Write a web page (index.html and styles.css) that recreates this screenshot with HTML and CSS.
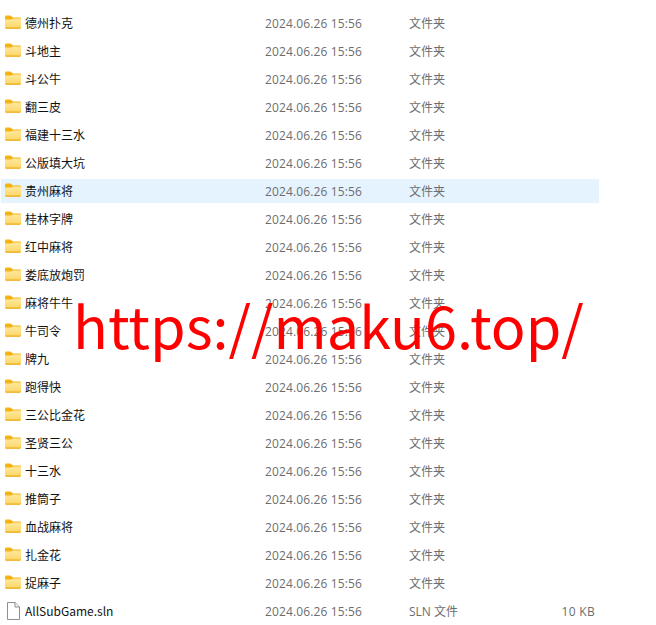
FILE: index.html
```html
<!DOCTYPE html>
<html lang="zh">
<head>
<meta charset="utf-8">
<title>AllSubGame</title>
<link rel="stylesheet" href="styles.css">
</head>
<body>
<svg class="defs" width="0" height="0" aria-hidden="true">
<defs>
<linearGradient id="fg" x1="0" y1="0" x2="0" y2="1"><stop offset="0" stop-color="#ffe9a0"/><stop offset="1" stop-color="#fdd565"/></linearGradient>
<symbol id="folder" viewBox="0 0 16 14">
<path d="M0 2.2C0 1.2.6.6 1.5.6h3.7c.6 0 .9.2 1.3.6L8 2.6h6.6c.8 0 1.4.6 1.4 1.4v2H0z" fill="#f5b312"/>
<path d="M0 4.4h6.4L8 3.4h6.6c.8 0 1.4.6 1.4 1.4v7.6c0 .7-.6 1.2-1.3 1.2H1.3C.6 13.6 0 13.1 0 12.4z" fill="url(#fg)"/>
<path d="M0 12.6h16c0 .7-.6 1.2-1.3 1.2H1.3C.6 13.8 0 13.3 0 12.6z" fill="#eeab12"/>
</symbol>
</defs>
</svg>
<main class="list">
<div class="row"><span class="name"><svg class="icon"><use href="#folder"/></svg>德州扑克</span><span class="date">2024.06.26 15:56</span><span class="type">文件夹</span><span class="size"></span></div>
<div class="row"><span class="name"><svg class="icon"><use href="#folder"/></svg>斗地主</span><span class="date">2024.06.26 15:56</span><span class="type">文件夹</span><span class="size"></span></div>
<div class="row"><span class="name"><svg class="icon"><use href="#folder"/></svg>斗公牛</span><span class="date">2024.06.26 15:56</span><span class="type">文件夹</span><span class="size"></span></div>
<div class="row"><span class="name"><svg class="icon"><use href="#folder"/></svg>翻三皮</span><span class="date">2024.06.26 15:56</span><span class="type">文件夹</span><span class="size"></span></div>
<div class="row"><span class="name"><svg class="icon"><use href="#folder"/></svg>福建十三水</span><span class="date">2024.06.26 15:56</span><span class="type">文件夹</span><span class="size"></span></div>
<div class="row"><span class="name"><svg class="icon"><use href="#folder"/></svg>公版填大坑</span><span class="date">2024.06.26 15:56</span><span class="type">文件夹</span><span class="size"></span></div>
<div class="row selected"><span class="name"><svg class="icon"><use href="#folder"/></svg>贵州麻将</span><span class="date">2024.06.26 15:56</span><span class="type">文件夹</span><span class="size"></span></div>
<div class="row"><span class="name"><svg class="icon"><use href="#folder"/></svg>桂林字牌</span><span class="date">2024.06.26 15:56</span><span class="type">文件夹</span><span class="size"></span></div>
<div class="row"><span class="name"><svg class="icon"><use href="#folder"/></svg>红中麻将</span><span class="date">2024.06.26 15:56</span><span class="type">文件夹</span><span class="size"></span></div>
<div class="row"><span class="name"><svg class="icon"><use href="#folder"/></svg>娄底放炮罚</span><span class="date">2024.06.26 15:56</span><span class="type">文件夹</span><span class="size"></span></div>
<div class="row"><span class="name"><svg class="icon"><use href="#folder"/></svg>麻将牛牛</span><span class="date">2024.06.26 15:56</span><span class="type">文件夹</span><span class="size"></span></div>
<div class="row"><span class="name"><svg class="icon"><use href="#folder"/></svg>牛司令</span><span class="date">2024.06.26 15:56</span><span class="type">文件夹</span><span class="size"></span></div>
<div class="row"><span class="name"><svg class="icon"><use href="#folder"/></svg>牌九</span><span class="date">2024.06.26 15:56</span><span class="type">文件夹</span><span class="size"></span></div>
<div class="row"><span class="name"><svg class="icon"><use href="#folder"/></svg>跑得快</span><span class="date">2024.06.26 15:56</span><span class="type">文件夹</span><span class="size"></span></div>
<div class="row"><span class="name"><svg class="icon"><use href="#folder"/></svg>三公比金花</span><span class="date">2024.06.26 15:56</span><span class="type">文件夹</span><span class="size"></span></div>
<div class="row"><span class="name"><svg class="icon"><use href="#folder"/></svg>圣贤三公</span><span class="date">2024.06.26 15:56</span><span class="type">文件夹</span><span class="size"></span></div>
<div class="row"><span class="name"><svg class="icon"><use href="#folder"/></svg>十三水</span><span class="date">2024.06.26 15:56</span><span class="type">文件夹</span><span class="size"></span></div>
<div class="row"><span class="name"><svg class="icon"><use href="#folder"/></svg>推筒子</span><span class="date">2024.06.26 15:56</span><span class="type">文件夹</span><span class="size"></span></div>
<div class="row"><span class="name"><svg class="icon"><use href="#folder"/></svg>血战麻将</span><span class="date">2024.06.26 15:56</span><span class="type">文件夹</span><span class="size"></span></div>
<div class="row"><span class="name"><svg class="icon"><use href="#folder"/></svg>扎金花</span><span class="date">2024.06.26 15:56</span><span class="type">文件夹</span><span class="size"></span></div>
<div class="row"><span class="name"><svg class="icon"><use href="#folder"/></svg>捉麻子</span><span class="date">2024.06.26 15:56</span><span class="type">文件夹</span><span class="size"></span></div>
<div class="row"><span class="name"><svg class="icon file" viewBox="0 0 14 18"><path d="M1.5.5h7.6l4.4 4.4v12.6h-12z" fill="#fff" stroke="#8f8f8f"/><path d="M9 .5v4.5h4.5" fill="#f0f0f0" stroke="#8f8f8f"/></svg>AllSubGame.sln</span><span class="date">2024.06.26 15:56</span><span class="type">SLN 文件</span><span class="size">10 KB</span></div>
</main>
<div class="watermark">https://maku6.top/</div>
</body>
</html>
```
FILE: styles.css
```css
html, body {
  margin: 0;
  padding: 0;
  background: #fff;
  width: 656px;
  height: 625px;
  overflow: hidden;
}
body {
  position: relative;
  font-family: "Noto Sans CJK SC", "Open Sans", sans-serif;
  font-size: 12px;
}
.defs {
  position: absolute;
}
.list {
  display: flex;
  flex-direction: column;
  gap: 4px;
  padding: 11px 0 0 1px;
  width: 598px;
}
.row {
  display: flex;
  align-items: center;
  height: 24px;
}
.selected {
  background: #e5f3ff;
}
.name {
  display: flex;
  align-items: center;
  width: 264px;
  padding: 0 0 2px 4px;
  box-sizing: border-box;
  color: #111;
}
.icon {
  width: 16px;
  height: 14px;
  margin-right: 4px;
  flex: none;
}
.icon.file {
  width: 14px;
  height: 18px;
  margin: 2px 5px 0 1px;
}
.date {
  width: 144px;
  color: #6d6d6d;
  letter-spacing: .13px;
  font-family: "Open Sans", "Noto Sans CJK SC", sans-serif;
}
.type {
  width: 100px;
  color: #6d6d6d;
  font-family: "Open Sans", "Noto Sans CJK SC", sans-serif;
}
.size {
  width: 86px;
  text-align: right;
  color: #6d6d6d;
  letter-spacing: .3px;
  font-family: "Open Sans", "Noto Sans CJK SC", sans-serif;
}
.watermark {
  position: absolute;
  left: 73px;
  top: 280px;
  font-family: "Noto Sans CJK SC", sans-serif;
  font-size: 57.5px;
  line-height: 88px;
  color: #ff0000;
  white-space: nowrap;
}
```
